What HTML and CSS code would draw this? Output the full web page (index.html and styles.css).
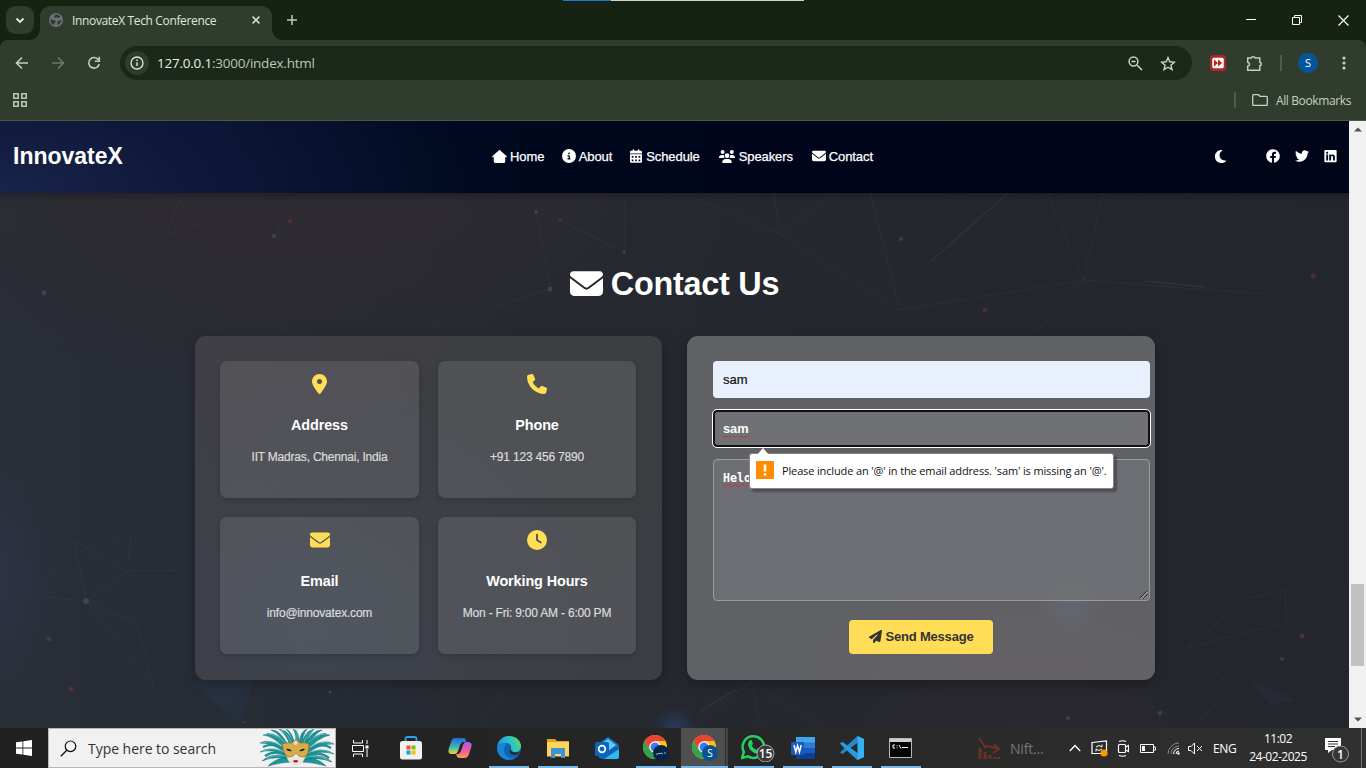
FILE: index.html
```html
<!DOCTYPE html>
<html lang="en">
<head>
<meta charset="utf-8">
<title>InnovateX Tech Conference</title>
<link rel="stylesheet" href="styles.css">
</head>
<body>
<svg class="defs" width="0" height="0" aria-hidden="true">
  <symbol id="envelope" viewBox="0 0 512 512"><path d="M48 64C21.500 64 0 85.500 0 112c0 15.100 7.100 29.300 19.200 38.400L236.800 313.600c11.400 8.500 27 8.500 38.400 0L492.800 150.400c12.100-9.100 19.200-23.300 19.200-38.400c0-26.500-21.500-48-48-48H48zM0 176V384c0 35.300 28.700 64 64 64H448c35.300 0 64-28.700 64-64V176L294.400 339.200c-22.800 17.100-54 17.100-76.800 0L0 176z"/></symbol>
  <symbol id="chrome" viewBox="0 0 24 24">
    <circle cx="12" cy="12" r="12" fill="#fbc116"/>
    <path d="M1.600 6A12 12 0 0 1 22.400 6H12L6.800 15z" fill="#ea4335"/>
    <path d="M1.600 6A12 12 0 0 0 12 24l5.200-9H6.800z" fill="#31a350"/>
    <circle cx="12" cy="12" r="5.800" fill="#fff"/><circle cx="12" cy="12" r="4.500" fill="#3b7bea"/>
  </symbol>
</svg>

<header class="titlebar">
  <div class="top-progress"><i></i></div>
  <button class="tab-search"><svg width="10" height="7" viewBox="0 0 10 7"><path d="M1.500 1.500L5 5l3.500-3.500" fill="none" stroke="#e3ecdd" stroke-width="1.800"/></svg></button>
  <div class="tab">
    <svg width="14" height="14" viewBox="0 0 14 14"><circle cx="7" cy="7" r="7" fill="#6c6f74"/><path d="M1.500 6.200c2 .3 3.200 1.200 4.500 1.300 1.300.2 1 1.400 0 1.800-.8.400-.2 1.500-1 2.700-2-.8-3.800-3-3.500-5.800zM6.500 1.300c2 .2 3.800 1 4.900 2.700L9.600 5.100 7.800 4.300 6.300 5 5 4.100zM8.600 8.200l3.700-1.500c0 2.500-1.600 4.500-4 5.400-.3-1.500.8-2-.2-2.900z" fill="#303d2e"/></svg>
    <span class="tab-title">InnovateX Tech Conference</span>
    <svg class="tab-x" width="8" height="8" viewBox="0 0 8 8"><path d="M.6.6l6.800 6.800M7.400.6L.6 7.400" stroke="#dce7d6" stroke-width="1.500"/></svg>
  </div>
  <svg class="newtab" width="10" height="10" viewBox="0 0 10 10"><path d="M5 0v10M0 5h10" stroke="#b9cdb5" stroke-width="1.500"/></svg>
  <div class="win-controls">
    <svg width="10" height="10" viewBox="0 0 10 10"><path d="M0 4.500h10" stroke="#fff"/></svg>
    <svg width="10" height="10" viewBox="0 0 10 10"><path d="M.5 2.500h7v7h-7zM2.500 2.500v-2h7v7h-2" fill="none" stroke="#fff"/></svg>
    <svg width="11" height="11" viewBox="0 0 11 11"><path d="M.5.5l10 10M10.500.5l-10 10" stroke="#fff" stroke-width="1.200"/></svg>
  </div>
</header>

<div class="toolbar">
  <svg class="arrow" width="14" height="14" viewBox="0 0 14 14"><path d="M13 7H1.800M7 1.500L1.500 7 7 12.500" fill="none" stroke="#bdd2b8" stroke-width="1.600"/></svg>
  <svg class="arrow" width="14" height="14" viewBox="0 0 14 14"><path d="M1 7h11.200M7 1.500L12.500 7 7 12.500" fill="none" stroke="#687c65" stroke-width="1.600"/></svg>
  <svg class="reload" width="14" height="14" viewBox="0 0 14 14"><path d="M11.300 3.700A5.300 5.300 0 1 0 12.200 8M12.300.8v4.400H7.900" fill="none" stroke="#bdd2b8" stroke-width="1.600"/></svg>
  <div class="omnibox">
    <span class="info"><svg width="14" height="14" viewBox="0 0 14 14"><circle cx="7" cy="7" r="6" fill="none" stroke="#dce7d6" stroke-width="1.300"/><path d="M7 6.200V10M7 3.600v1.500" stroke="#dce7d6" stroke-width="1.400"/></svg></span>
    <span class="url"><b>127.0.0.1</b>:3000/index.html</span>
    <svg width="15" height="15" viewBox="0 0 15 15"><path d="M9.200 9.200l4.800 4.800M3.500 5.500h4" stroke="#c8d4c4" stroke-width="1.600"/><circle cx="5.500" cy="5.500" r="4.400" fill="none" stroke="#c8d4c4" stroke-width="1.500"/></svg>
    <svg class="star" width="16" height="15" viewBox="0 0 16 15"><path d="M8 1.600l1.800 4.200 4.600.4-3.500 3 1.100 4.400L8 11.200l-4 2.400 1.100-4.400-3.500-3 4.600-.4z" fill="none" stroke="#c8d4c4" stroke-width="1.400"/></svg>
  </div>
  <svg class="ext" width="16" height="16" viewBox="0 0 16 16"><rect width="16" height="16" rx="3.500" fill="#b32522"/><rect x="2.300" y="2.700" width="11.400" height="10.600" rx="1.500" fill="#fff"/><path d="M4 4.500L8 8l-4 3.500zM8 4.500L12.200 8 8 11.500z" fill="#bd211e"/></svg>
  <svg class="puzzle" width="17" height="17" viewBox="0 0 17 17"><path d="M1.700 3h3.500c.3-1.800 3.600-1.800 3.900 0h4.700v4.200c2 .3 2 3.200 0 3.500v4.600H1.700v-4c2.500-.7 2.500-3.400 0-4.100z" fill="none" stroke="#bdd2b8" stroke-width="1.500"/></svg>
  <i class="bar"></i>
  <span class="avatar">S</span>
  <svg class="dots" width="4" height="14" viewBox="0 0 4 14"><g fill="#c4d6bf"><circle cx="2" cy="2" r="1.600"/><circle cx="2" cy="7" r="1.600"/><circle cx="2" cy="12" r="1.600"/></g></svg>
</div>

<div class="bookmarks">
  <svg width="14" height="14" viewBox="0 0 14 14"><path d="M.8.800h4.400v4.400H.8zM8.800.800h4.400v4.400H8.800zM.8 8.800h4.400v4.400H.8zM8.800 8.800h4.400v4.400H8.800z" fill="none" stroke="#b9c5b6" stroke-width="1.600"/></svg>
  <i class="bar"></i>
  <svg class="folder" width="16" height="12" viewBox="0 0 16 12"><path d="M.7 2v8.400q0 .9.900.9h12.800q.9 0 .9-.9V3.200q0-.9-.9-.9H8L6.500.7H1.600q-.9 0-.9.900z" fill="none" stroke="#c8d4c4" stroke-width="1.300"/></svg>
  <span class="all-bm">All Bookmarks</span>
</div>

<div class="viewport">
  <div class="page">
    <nav class="nav">
      <div class="logo">InnovateX</div>
      <ul class="links">
        <li><svg width="15" height="13" viewBox="0 0 576 512"><path d="M564 232L309 9c-12-11-30-11-42 0L12 232c-22 20-8 56 20 56h32l-1 176c0 27 21 48 48 48h354c27 0 48-21 48-48l-1-176h32c28 0 42-36 20-56z"/></svg>Home</li>
        <li><svg width="14" height="14" viewBox="0 0 512 512"><path d="M256 512A256 256 0 1 0 256 0a256 256 0 1 0 0 512zM216 336h24V272H216c-13.300 0-24-10.700-24-24s10.700-24 24-24h48c13.300 0 24 10.700 24 24v88h8c13.300 0 24 10.700 24 24s-10.700 24-24 24H216c-13.300 0-24-10.700-24-24s10.700-24 24-24zm40-208a32 32 0 1 1 0 64 32 32 0 1 1 0-64z"/></svg>About</li>
        <li><svg width="12" height="14" viewBox="0 0 448 512"><path fill-rule="evenodd" d="M96 32c0-42 64-42 64 0v32h128V32c0-42 64-42 64 0v32h48c27 0 48 21 48 48v48H0v-48c0-27 21-48 48-48h48zM0 192h448v272c0 27-21 48-48 48H48c-27 0-48-21-48-48zM64 256v64h64v-64zm128 0v64h64v-64zm128 0v64h64v-64zM64 384v64h64v-64zm128 0v64h64v-64zm128 0v64h64v-64z"/></svg>Schedule</li>
        <li class="spk"><svg width="16" height="13" viewBox="0 0 640 512"><circle cx="144" cy="80" r="80"/><circle cx="512" cy="80" r="80"/><circle cx="320" cy="224" r="96"/><path d="M0 298c0-59 48-106 107-106h42c17 0 32 3 46 10-10 59 16 94 40 118H21c-12 0-21-10-21-22zM405 320c25-24 50-59 40-118 14-7 29-10 46-10h42c59 0 107 47 107 106 0 12-9 22-21 22zM128 485c0-73 60-133 133-133h118c73 0 133 60 133 133 0 15-12 27-27 27H155c-15 0-27-12-27-27z"/></svg>Speakers</li>
        <li class="con"><svg width="14" height="14"><use href="#envelope"/></svg>Contact</li>
      </ul>
      <div class="social">
        <svg class="moon" width="13" height="15" viewBox="0 0 384 512"><path d="M223.500 32C100 32 0 132.300 0 256S100 480 223.500 480c60.600 0 115.500-24.200 155.800-63.400c5-4.900 6.300-12.500 3.100-18.700s-10.100-9.700-17-8.500c-9.800 1.700-19.800 2.600-30.100 2.600c-96.900 0-175.500-78.800-175.500-176c0-65.800 36-123.100 89.300-153.300c6.100-3.500 9.200-10.500 7.700-17.300s-7.300-11.900-14.300-12.500c-6.300-.5-12.600-.8-19-.8z"/></svg>
        <svg width="14" height="14" viewBox="0 0 512 512"><path d="M504 256C504 119 393 8 256 8S8 119 8 256c0 123.780 90.690 226.380 209.250 245V327.690h-63V256h63v-54.640c0-62.150 37-96.480 93.670-96.480 27.140 0 55.520 4.840 55.520 4.840v61h-31.280c-30.800 0-40.410 19.120-40.410 38.730V256h68.780l-11 71.690h-57.780V501C413.310 482.380 504 379.780 504 256z"/></svg>
        <svg width="14" height="14" viewBox="0 0 512 512"><path d="M459.370 151.716c.325 4.548.325 9.097.325 13.645 0 138.720-105.583 298.558-298.558 298.558-59.452 0-114.680-17.219-161.137-47.106 8.447.974 16.568 1.299 25.340 1.299 49.055 0 94.213-16.568 130.274-44.832-46.132-.975-84.792-31.188-98.112-72.772 6.498.974 12.995 1.624 19.818 1.624 9.421 0 18.843-1.300 27.614-3.573-48.081-9.747-84.143-51.980-84.143-102.985v-1.299c13.969 7.797 30.214 12.670 47.431 13.319-28.264-18.843-46.781-51.005-46.781-87.391 0-19.492 5.197-37.360 14.294-52.954 51.655 63.675 129.300 105.258 216.365 109.807-1.624-7.797-2.599-15.918-2.599-24.040 0-57.828 46.782-104.934 104.934-104.934 30.213 0 57.502 12.670 76.670 33.137 23.715-4.548 46.456-13.320 66.599-25.340-7.798 24.366-24.366 44.833-46.132 57.827 21.117-2.273 41.584-8.122 60.426-16.243-14.292 20.791-32.161 39.308-52.628 54.253z"/></svg>
        <svg width="13" height="14" viewBox="0 0 448 512"><path d="M416 32H31.900C14.300 32 0 46.500 0 64.300v383.400C0 465.500 14.300 480 31.900 480H416c17.600 0 32-14.500 32-32.300V64.300c0-17.800-14.400-32.300-32-32.300zM135.400 416H69V202.200h66.500V416zm-33.200-243c-21.300 0-38.500-17.300-38.500-38.500S80.900 96 102.200 96c21.200 0 38.500 17.300 38.500 38.500 0 21.300-17.200 38.500-38.500 38.500zm282.100 243h-66.400V312c0-24.800-.5-56.700-34.500-56.700-34.600 0-39.900 27-39.900 54.900V416h-66.400V202.200h63.700v29.200h.9c8.900-16.800 30.600-34.500 62.900-34.500 67.200 0 79.700 44.300 79.700 101.900V416z"/></svg>
      </div>
    </nav>
    <main class="contact">
      <svg class="network" width="1349" height="535" viewBox="0 193 1349 535" fill="none">
        <g stroke="#4c5362" stroke-opacity=".17">
          <path d="M179 200l-13 35 35-12zM273 238l13-25M536 212l-107 116 122-40zM536 212l24 8 65 33-1-60M560 220l22-27M536 212l11-19M74 541l12 60-49-5zL128 571 86 601l68 85-18-63-50-22M128 571l54-1M113 541l18-8-2 26zM696 199l83 34 120 77 184-30 180 14M779 233l60-40M774 193l5 40M870 193l30 117M1048 193l35 87 20-87M1083 280l105-87M1083 280l-48 54M1083 280l50 50M700 714l51-32 74 46M751 682l-60 46M751 682l10 46M1135 682l25 35M1187 648l60-50 38-8 2 32-100 26 47 40-35 33M336 680l47 48M510 680l-30 48"/>
        </g>
        <path d="M930 262L1008 193" stroke="#747a84" stroke-opacity=".22"/><path d="M1145 281l60 6M700 711l36-22" stroke="#747a84" stroke-opacity=".22"/>
        <g fill="#4c6379" fill-opacity=".45"><circle cx="44" cy="293" r="2.500"/><circle cx="86" cy="601" r="3"/><circle cx="550" cy="289" r="2.500"/><circle cx="274" cy="236" r="2"/><circle cx="901" cy="239" r="2"/><circle cx="536" cy="212" r="1.700"/><circle cx="624" cy="252" r="1.700"/><circle cx="1160" cy="713" r="2.200"/><circle cx="1068" cy="718" r="2"/><circle cx="1282" cy="659" r="2"/><circle cx="49" cy="639" r="2"/><circle cx="330" cy="692" r="1.500"/></g>
        <g fill="#843a40" fill-opacity=".45"><circle cx="290" cy="221" r="2"/><circle cx="71" cy="689" r="2.500"/><circle cx="985" cy="310" r="2.500"/><circle cx="1313" cy="276" r="2.500"/><circle cx="1302" cy="636" r="2.500"/><circle cx="244" cy="722" r="1.500"/><circle cx="560" cy="220" r="1.700"/></g>
        <path d="M195 686l46 38 12-44h-53z" fill="#26374f" opacity=".4"/><path d="M1250 678l45 22-26 5z" fill="#42435c" opacity=".15"/>
      </svg>
      <h2><svg width="33" height="33"><use href="#envelope"/></svg>Contact Us</h2>
      <div class="columns">
        <section class="panel info-panel">
          <article><svg width="15" height="20" viewBox="0 0 384 512"><path d="M215.700 499.200C267 435 384 279.400 384 192C384 86 298 0 192 0S0 86 0 192c0 87.400 117 243 168.300 307.200c12.300 15.300 35.100 15.300 47.400 0zM192 128a64 64 0 1 1 0 128 64 64 0 1 1 0-128z"/></svg><h3>Address</h3><p>IIT Madras, Chennai, India</p></article>
          <article><svg width="20" height="20" viewBox="0 0 512 512"><path d="M164.900 24.600c-7.700-18.600-28-28.500-47.400-23.200l-88 24C12.100 30.200 0 46 0 64C0 311.400 200.600 512 448 512c18 0 33.800-12.100 38.600-29.500l24-88c5.300-19.400-4.600-39.700-23.200-47.400l-96-40c-16.300-6.800-35.200-2.100-46.300 11.600L304.700 368C234.300 334.700 177.300 277.700 144 207.300L193.300 167c13.700-11.200 18.400-30 11.600-46.300l-40-96z"/></svg><h3>Phone</h3><p>+91 123 456 7890</p></article>
          <article><svg width="20" height="20"><use href="#envelope"/></svg><h3>Email</h3><p>info@innovatex.com</p></article>
          <article><svg width="20" height="20" viewBox="0 0 512 512"><path d="M256 0a256 256 0 1 1 0 512A256 256 0 1 1 256 0zM232 120V256c0 8 4 15.500 10.700 20l96 64c11 7.400 25.900 4.400 33.300-6.700s4.400-25.900-6.700-33.300L280 243.200V120c0-13.300-10.700-24-24-24s-24 10.700-24 24z"/></svg><h3>Working Hours</h3><p>Mon - Fri: 9:00 AM - 6:00 PM</p></article>
        </section>
        <section class="panel form-panel">
          <div class="field filled">sam</div>
          <div class="field focused"><span class="spell">sam</span>
            <div class="bubble">
              <svg class="bubble-tip" width="14" height="8" viewBox="0 0 14 8"><path d="M1 8l6-7 6 7z" fill="#fff"/></svg>
              <svg width="18" height="18" viewBox="0 0 18 18"><rect width="18" height="18" rx="1" fill="#ff8c00"/><path d="M9 3.500v7M9 12.200v2.300" stroke="#fff" stroke-width="2.600"/></svg>
              <span>Please include an '@' in the email address. 'sam' is missing an '@'.</span>
            </div>
          </div>
          <div class="area"><span class="typo">Helo</span><svg class="grip" width="9" height="9" viewBox="0 0 9 9"><path d="M.5 8.500l8-8M4.500 8.500l4-4" stroke="#222" /><path d="M1.500 9L9 1.500M5.500 9L9 5.500" stroke="#ddd" stroke-width=".7"/></svg></div>
          <button class="send"><svg width="13" height="13" viewBox="0 0 512 512"><path d="M498.100 5.600c10.100 7 15.400 19.100 13.500 31.200l-64 416c-1.500 9.700-7.400 18.200-16 23s-18.900 5.400-28 1.600L284 427.700l-68.500 74.100c-8.900 9.700-22.900 12.900-35.200 8.100S160 493.200 160 480V396.400c0-4 1.500-7.800 4.200-10.700L331.800 202.800c5.800-6.300 5.600-16-.4-22s-15.700-6.400-22-.7L106 360.800 17.700 316.600C7.100 311.300 .3 300.700 0 288.900s5.900-22.800 16.100-28.700l448-256c10.700-6.100 23.900-5.500 34 1.400z"/></svg>Send Message</button>
        </section>
      </div>
    </main>
  </div>
  <div class="scrollbar">
    <svg width="8" height="5" viewBox="0 0 8 5"><path d="M0 4.500L4 .5l4 4z" fill="#505050"/></svg>
    <i class="thumb"></i>
    <svg width="8" height="5" viewBox="0 0 8 5"><path d="M0 .5h8l-4 4z" fill="#505050"/></svg>
  </div>
</div>

<footer class="taskbar">
  <div class="start"><svg width="16" height="16" viewBox="0 0 16 16"><path d="M0 2.300L6.500 1.400v6.200H0zM7.300 1.200L16 0v7.600H7.300zM0 8.400h6.500v6.200L0 13.700zM7.300 8.400H16V16l-8.700-1.200z" fill="#fff"/></svg></div>
  <div class="search">
    <svg width="17" height="17" viewBox="0 0 17 17"><circle cx="10.500" cy="6.300" r="5.300" fill="none" stroke="#111" stroke-width="1.200"/><path d="M6.800 10.200L.8 16.200" stroke="#111" stroke-width="1.300"/></svg>
    <span>Type here to search</span>
    <svg class="mask" width="74" height="38" viewBox="0 0 74 38">
      <g fill="#1e9696" stroke="#0c5c67" stroke-width=".4">
        <path d="M30 20Q14 2 3 6Q15 7 28 24zM28 22Q10 8 0 14Q14 14 28 26zM28 25Q10 16 0 23Q14 19 30 29zM30 26Q10 24 2 32Q16 26 32 31zM30 28Q17 28 8 37Q22 33 33 33zM44 20Q56 2 70 6Q58 8 45 24zM46 22Q63 8 74 15Q59 14 46 26zM46 25Q64 17 74 25Q59 20 44 29zM44 26Q64 25 72 33Q57 27 42 31zM44 28Q57 28 66 37Q52 33 41 33zM29 18Q20 0 11 1Q21 5 30 23zM32 16Q27 1 19 0Q27 5 32 22zM35 16Q32 2 26 0Q32 6 35 20zM36 14Q36 3 33 0Q40 2 39 17zM39 15Q40 2 47 0Q42 6 42 19zM42 16Q46 2 54 0Q47 8 44 20zM44 18Q51 1 62 1Q53 5 45 23z"/>
      </g>
      <g fill="none" stroke="#208c93" stroke-width="2.200"><path d="M31 18Q17 5 7 5M29 24Q14 12 3 18M31 28Q16 20 5 27M43 18Q57 5 66 5M45 24Q60 12 71 19M43 28Q58 21 69 29M34 17Q29 4 23 2M41 17Q46 4 51 2"/></g>
      <g fill="none" stroke="#62c3be" stroke-width=".8"><path d="M32 19Q16 4 6 5M30 22Q15 9 2 14M30 26Q14 16 3 22M31 29Q17 23 6 30M43 19Q57 4 67 5M44 22Q59 9 72 15M43 26Q60 17 72 24M43 29Q57 24 69 32M33 18Q28 3 20 1M42 18Q47 3 54 1M37 15V1"/></g>
      <path d="M26 22q10-7 20 0 0 12-10 15.500-10-3.500-10-15.500z" fill="#eee5df"/>
      <path d="M22 15q5-2 10-1l4-4 4 4q6-1 9 1 0 13-6 13-4 0-7-4-3 4-7 4-5 0-7-13z" fill="#d9aa48" stroke="#80601e" stroke-width=".6"/>
      <path d="M26 20q3-1 6 2-4 1-6-2zM39 22q3-3 6-2-2 3-6 2z" fill="#1d2426"/><path d="M32.500 32q3.500-2 6 0-2.500 3-6 0z" fill="#b91327"/><circle cx="35.500" cy="14" r="2" fill="#d7dde2"/>
    </svg>
  </div>
  <div class="tview"><svg width="17" height="17" viewBox="0 0 17 17" fill="none" stroke="#fff"><path d="M1.500 0v3h9V0M1.500 17v-3h9v3M.5 5.500h11v6H.5zM15 0v4M15 9v8"/><path d="M13.500 5.500h3v3h-3z" fill="#fff" stroke="none"/></svg></div>
  <div class="apps">
    <div><svg width="24" height="24" viewBox="0 0 24 24"><path d="M6.500 7V3q0-2 2-2h7q2 0 2 2v4" fill="none" stroke="#21a8e3" stroke-width="1.800"/><rect x="1" y="5" width="22" height="18.500" rx="2.500" fill="#f1f1f1"/><path d="M7.500 9.500h4v4h-4z" fill="#f35325"/><path d="M12.500 9.500h4v4h-4z" fill="#81bc06"/><path d="M7.500 14.500h4v4h-4z" fill="#05a6f0"/><path d="M12.500 14.500h4v4h-4z" fill="#ffba08"/></svg></div>
    <div><svg width="24" height="22" viewBox="0 0 24 22"><defs><linearGradient id="c1" x2="0" y2="1"><stop stop-color="#2a63df"/><stop offset=".55" stop-color="#31bab3"/><stop offset="1" stop-color="#efd83d"/></linearGradient><linearGradient id="c2" x2="0" y2="1"><stop stop-color="#a75cf2"/><stop offset=".5" stop-color="#ec59a7"/><stop offset="1" stop-color="#fc9c4a"/></linearGradient></defs><path d="M7 1h9q2 0 2 4h-3q-2 0-3 3l-2 6q-1 3-3 3H4q-5 0-3-6l2-6Q4 1 7 1z" fill="url(#c1)"/><path d="M18 5h3q4 1 2 6l-2 6q-1 4-5 4h-5q-2 0-3-4h2q2 0 3-3l2-6q1-3 3-3z" fill="url(#c2)"/></svg></div>
    <div class="open"><svg width="24" height="24" viewBox="0 0 24 24"><defs><linearGradient id="e1" x1="0" y1=".5" x2="1" y2=".2"><stop stop-color="#188ed8"/><stop offset=".5" stop-color="#28bed0"/><stop offset="1" stop-color="#5edb61"/></linearGradient></defs><circle cx="12" cy="12" r="12" fill="#1262b1"/><path d="M0 11C1 4 6 0 12 0c8 0 12 6 12 10 0 4-3 6-6 6-4 0-5-1-4-3 1-4-2-6-5-6-5 0-8 2-9 4z" fill="url(#e1)"/><path d="M0 12c2-5 7-6 10-4-5 3-4 11 3 14l5 0c-7 4-17 1-18-10z" fill="#1686d9"/><path d="M14 13c0 3 3 4 9 3-2 3-5 3.500-8 2.500-3-1.500-3-4.500-1-5.500z" fill="#222b36"/></svg></div>
    <div class="open"><svg width="22" height="20" viewBox="0 0 22 20"><path d="M0 1h8l2 2h12v15H0z" fill="#e0a51c"/><path d="M0 4h22v14.500H0z" fill="#ffd35b"/><path d="M4 20v-9q0-1 1-1h12q1 0 1 1v9h-4v-4H8v4z" fill="#3d93d8"/></svg></div>
    <div><svg width="24" height="22" viewBox="0 0 24 22"><path d="M3 7L13 0l10 7v14H4z" fill="#1472c8"/><path d="M6 7l7-5 8 6-8 6z" fill="#63c9f0"/><path d="M24 8v12q0 2-2 2H8z" fill="#30b9ef"/><path d="M12 15L24 8v4L9 22H6z" fill="#1160ae"/><rect y="5" width="14" height="14" rx="1.500" fill="#0a65bd"/><circle cx="7" cy="12" r="3.300" fill="none" stroke="#fff" stroke-width="1.800"/></svg></div>
    <div class="open"><svg width="26" height="26" viewBox="0 0 26 26"><use href="#chrome" width="24" height="24"/><circle cx="18" cy="18" r="8" fill="#07244b"/><path d="M13 19q2 1 3-1l1 1q1-2 3 0M22 17v2" fill="none" stroke="#d6dce4" stroke-width=".8"/></svg></div>
    <div class="open current"><svg width="26" height="26" viewBox="0 0 26 26"><use href="#chrome" width="24" height="24"/><circle cx="18" cy="18" r="8" fill="#075292"/><text x="18" y="21.500" text-anchor="middle" class="profile">S</text></svg></div>
    <div class="open"><svg width="34" height="28" viewBox="0 0 34 28"><path d="M1 24l1.800-6A10.800 10.800 0 1 1 7 22.400z" fill="none" stroke="#24cf63" stroke-width="2.500"/><path d="M8 7q2-2 3 0l1 3-1.500 1.500q2 3.500 5 4.500l1.500-2 4 2q0 4-4 4Q9 19 7 11q0-2 1-4z" fill="#24cf63"/><circle cx="24.500" cy="19.500" r="8.500" fill="#3a3a3a" stroke="#aaa"/><text x="24.500" y="24" text-anchor="middle" class="count">15</text></svg></div>
    <div class="open"><svg width="24" height="22" viewBox="0 0 24 22"><path d="M5 0h19v6H5z" fill="#41a5ee"/><path d="M5 5.500h19V11H5z" fill="#2b7cd3"/><path d="M5 11h19v5.500H5z" fill="#185abd"/><path d="M5 16h19v6H5z" fill="#103f91"/><rect y="5" width="13" height="13" rx="1" fill="#185abd"/><path d="M3 8l1.800 7L6.600 8.600 8.400 15 10.200 8" fill="none" stroke="#fff" stroke-width="1.500"/></svg></div>
    <div class="open"><svg width="24" height="24" viewBox="0 0 24 24"><path fill-rule="evenodd" d="M17.500 0L24 3v18l-6.500 3L7 14.500 2.500 18 0 16.500 4.500 12 0 7.500 2.500 6 7 9.500zM18 6.500L10.500 12l7.500 5.500z" fill="#2489ca"/><path d="M17.500 0L24 3v18l-6.500 3z" fill="#35b1f1"/><path d="M0 7.500L2.500 6 18 17.500V24h-.5z" fill="#2a9be0"/></svg></div>
    <div class="open"><svg width="23" height="20" viewBox="0 0 23 20"><path d="M.5.500h22v19H.5z" fill="#050505" stroke="#b9b9b9"/><path d="M1 1h21v3H1z" fill="#d0d0d0"/><path d="M6 7H4v3h2M8 7.500v.8M8 9.500v.8M10 7l2 3.500M13 9.500h6" fill="none" stroke="#fff"/></svg></div>
  </div>
  <div class="tray">
    <svg class="stock" width="23" height="23" viewBox="0 0 23 23" fill="none" stroke="#6c321f"><path d="M1 1l6 9 3-1 11 3M16 7l5 5-6 4" stroke-width="2"/><path d="M2 11v11M7 15v7M12 18v4M17 20v2M21 20v2" stroke-width="3"/></svg>
    <span class="nift">Nift...</span>
    <svg class="chev" width="12" height="8" viewBox="0 0 12 8"><path d="M.8 7L6 1.500 11.200 7" fill="none" stroke="#fff" stroke-width="1.400"/></svg>
    <svg width="17" height="17" viewBox="0 0 17 17"><path d="M1 2.500L15.500 1v12.500H1z" fill="none" stroke="#fff" stroke-width="1.200"/><path d="M5 7q3-3 6 0V4.500M11 9q-3 3-6 0v2.500" fill="none" stroke="#fff"/><circle cx="13" cy="13" r="3.600" fill="#ff9800"/></svg>
    <svg width="12" height="17" viewBox="0 0 12 17" fill="none" stroke="#fff" stroke-width="1.200"><path d="M2 1.500q4-1.500 7 0M2 15.500q4 1.500 7 0M2.500 4.500h5q1 0 1 1v6q0 1-1 1h-5q-1 0-1-1v-6q0-1 1-1zM8.500 7l3-1.500v6l-3-1.500"/></svg>
    <svg width="16" height="9" viewBox="0 0 16 9"><path d="M.5.500h13v8H.5zM14 3h1.500v3H14" fill="none" stroke="#fff"/><path d="M2 2h3v5H2z" fill="#fff"/></svg>
    <svg width="13" height="13" viewBox="0 0 13 13" fill="none"><path d="M1 12A11 11 0 0 1 12 1M4 12A8 8 0 0 1 12 4" stroke="#888"/><path d="M6.500 12A5.500 5.500 0 0 1 12 6.500M9 12A3 3 0 0 1 12 9" stroke="#fff"/><circle cx="11.500" cy="11.500" r="1.200" fill="#fff"/></svg>
    <svg width="15" height="13" viewBox="0 0 15 13" fill="none" stroke="#fff"><path d="M.5 4.500H3l3.500-3.500v11L3 8.500H.5zM9 4l5 5M14 4L9 9"/></svg>
    <span class="lang">ENG</span>
    <div class="clock"><span>11:02</span><span>24-02-2025</span></div>
    <svg class="notif" width="26" height="27" viewBox="0 0 26 27"><path d="M1 1h16v12H8l-4 3v-3H1z" fill="#fff"/><path d="M4 4.500h10M4 7h10M4 9.500h7" stroke="#333"/><circle cx="16.500" cy="17" r="8" fill="#363636" stroke="#999"/><text x="16.500" y="21.500" text-anchor="middle" class="count">1</text></svg>
    <i class="peek"></i>
  </div>
</footer>
</body>
</html>
```
FILE: styles.css
```css
* { box-sizing: border-box; }
body { margin: 0; width: 1366px; height: 768px; overflow: hidden; display: flex; flex-direction: column; background: #162312; font-family: "Open Sans", "Noto Sans", sans-serif; }
svg { display: block; flex: none; }
.defs { position: absolute; }
button { border: 0; padding: 0; }

.titlebar { height: 40px; display: flex; align-items: center; background: #162312; padding-left: 6px; position: relative; flex: none; }
.top-progress { position: absolute; left: 563px; top: 0; width: 241px; height: 1px; background: #d0d4ce; }
.top-progress i { display: block; width: 48px; height: 1px; background: #1979d3; }
.tab-search { width: 28px; height: 28px; border-radius: 9px; background: #303d2e; display: flex; align-items: center; justify-content: center; }
.tab { width: 232px; height: 34px; align-self: flex-end; margin-left: 6px; padding: 0 12px 6px 9px; background: #303d2e; border-radius: 10px 10px 0 0; display: flex; align-items: center; position: relative; }
.tab::before, .tab::after { content: ""; position: absolute; bottom: 0; width: 10px; height: 10px; }
.tab::before { left: -10px; background: radial-gradient(circle at 0 0, transparent 9.500px, #303d2e 10px); }
.tab::after { right: -10px; background: radial-gradient(circle at 100% 0, transparent 9.500px, #303d2e 10px); }
.tab-title { margin-left: 9px; font-size: 12px; letter-spacing: -.35px; color: #dfe8da; white-space: nowrap; }
.tab-x { margin-left: auto; }
.newtab { margin-left: 15px; }
.win-controls { margin-left: auto; display: flex; gap: 36px; padding-right: 17px; align-items: center; }

.toolbar { height: 40px; flex: none; display: flex; align-items: center; padding: 6px 20px 0 15px; background: #303d2e; border-radius: 8px 8px 0 0; }
.arrow + .arrow { margin-left: 22px; }
.reload { margin-left: 22px; }
.omnibox { width: 1072px; height: 34px; margin-left: 19px; background: #1b281a; border-radius: 17px; display: flex; align-items: center; padding: 0 16px 0 5px; }
.info { width: 24px; height: 24px; border-radius: 50%; background: #303d2e; display: flex; align-items: center; justify-content: center; }
.url { margin: 0 auto 0 8px; font-size: 13.500px; letter-spacing: -.23px; color: #bcc7b8; }
.url b { font-weight: 400; color: #e8efe5; }
.star { margin-left: 17px; }
.ext { margin-left: 18px; }
.puzzle { margin-left: 20px; }
.bar { width: 2px; height: 16px; background: #4c5d49; }
.toolbar .bar { margin-left: 17px; }
.avatar { margin-left: 16px; width: 20px; height: 20px; border-radius: 50%; background: #04569c; color: #fff; font-size: 11px; line-height: 20px; text-align: center; }
.dots { margin-left: 24px; }
.bookmarks { height: 41px; flex: none; display: flex; align-items: center; padding: 0 15px 0 13px; background: #303d2e; border-bottom: 1px solid #4b5848; }
.bookmarks .bar { margin-left: auto; }
.folder { margin-left: 16px; }
.all-bm { margin-left: 8px; font-size: 12px; letter-spacing: -.38px; color: #c6d0c2; }

.viewport { height: 607px; flex: none; display: flex; }
.page { width: 1349px; font-family: "Liberation Sans", Arial, sans-serif; }
.nav { height: 72px; display: grid; grid-template-columns: 479px auto 1fr; align-items: center; padding: 0 12px 2px 13px; color: #fff; background: radial-gradient(ellipse 480px 220px at 0 100%, #182449 0, #0d1738 45%, transparent 100%), linear-gradient(90deg, #0a1230, #000a20 30%, #00051b 55%, #000519); }
.nav svg { fill: #fff; }
.logo { font-size: 23px; font-weight: 700; }
.links { list-style: none; margin: 0; padding: 0; display: flex; gap: 18px; font-size: 13px; letter-spacing: -.1px; -webkit-text-stroke: .25px #fff; }
.links li { display: flex; align-items: center; gap: 3px; }
.links li + li { gap: 2.500px; }
.links li:nth-child(3) { gap: 4px; }
.links .spk { gap: 4px; margin-left: 1px; }
.links .con { gap: 3px; margin-left: 1px; }
.social { display: flex; justify-content: flex-end; align-items: center; gap: 15px; }
.moon { margin-right: 24px; }

.contact { height: 535px; position: relative; display: flex; flex-direction: column; align-items: center; padding-top: 74px; background: radial-gradient(ellipse 60px 130px at 0 72%, #303246, transparent), radial-gradient(ellipse 440px 200px at 22% 0, #2e2a31 25%, transparent), radial-gradient(ellipse 260px 90px at 76% 100%, #2b282e, transparent), radial-gradient(ellipse 22px 22px at 50% 100%, #263b5c, transparent), linear-gradient(90deg, #292e37 0, #25282f 45%, #23262d); }
.contact::before { content: ""; position: absolute; left: 0; right: 0; top: 0; height: 9px; background: linear-gradient(rgba(0, 0, 0, .22), transparent); }
.network { position: absolute; left: 0; top: 0; }
.contact h2 { position: relative; margin: 0; height: 35px; display: flex; align-items: center; gap: 8px; font-size: 32.400px; letter-spacing: -.25px; color: #fff; }
.contact h2 svg { fill: #fff; margin-top: -2px; }
.columns { position: relative; display: flex; gap: 25px; margin: 34px 0 0 1px; }
.panel { height: 344px; border-radius: 11px; box-shadow: 0 4px 12px rgba(0, 0, 0, .25); }
.info-panel { width: 467px; padding: 25px; display: grid; grid-template-columns: 199px 198px; grid-template-rows: 137px 137px; gap: 19px; background: radial-gradient(ellipse 65% 75% at 25% 85%, rgba(62, 70, 84, .6), transparent), linear-gradient(120deg, #403f46, #3d3e42 45%, #3c3e43); }
.info-panel article { border-radius: 7px; background: rgba(255, 255, 255, .1); box-shadow: 0 2px 6px rgba(0, 0, 0, .18); display: flex; flex-direction: column; align-items: center; padding-top: 13px; }
.info-panel svg { fill: #ffdd57; }
.info-panel h3 { margin: 22px 0 0; font-size: 14.400px; line-height: 18px; letter-spacing: -.1px; color: #fff; }
.info-panel p { margin: 15px 0 0; font-size: 12px; line-height: 17px; letter-spacing: -.2px; color: #dadbdc; -webkit-text-stroke: .2px #dadbdc; white-space: nowrap; }
.form-panel { width: 468px; padding: 25px 26px; background: radial-gradient(circle 28px at 82% 79%, rgba(102, 106, 120, .7), transparent), radial-gradient(ellipse 230px 100px at 72% 100%, #646164, transparent), #606165; }
.field { width: 437px; height: 37px; border-radius: 4px; padding: 0 10px; font-size: 13px; line-height: 37px; }
.filled { background: #e8f0fe; color: #111; -webkit-text-stroke: .2px #111; }
.focused { position: relative; margin-top: 12px; background: #707175; color: #fff; font-weight: 700; border: 2px solid #101010; outline: 1px solid #fff; padding: 0 8px; line-height: 33px; font-size: 12.800px; }
.spell { background: repeating-linear-gradient(90deg, #e02525 0 2px, transparent 2px 3px) left bottom / 100% 1px no-repeat; padding-bottom: 1px; }
.bubble { position: absolute; z-index: 2; left: 34px; top: 41px; width: 365px; height: 36px; padding: 0 6px; display: flex; align-items: center; gap: 8px; background: #fff; border: 1px solid #858585; border-radius: 3px; box-shadow: 3px 3px 2px rgba(0, 0, 0, .3); color: #111; font: 11px/18px "Open Sans", "Noto Sans", sans-serif; letter-spacing: -.14px; white-space: nowrap; }
.bubble > svg { margin-top: -2px; }
.bubble .bubble-tip { position: absolute; left: 6px; top: -7px; margin: 0; }
.area { position: relative; width: 437px; height: 142px; margin-top: 12px; border: 1px solid #9b9ca0; border-radius: 4px; background: rgba(112, 113, 117, .92); padding: 9px 9px; color: #fff; font: 700 11.700px/18px "DejaVu Sans Mono", monospace; }
.typo { text-decoration: underline wavy #ed1c24 1px; text-underline-offset: 1px; }
.grip { position: absolute; right: 1px; bottom: 1px; }
.send { width: 144px; height: 34px; margin: 19px 0 0 136px; padding-bottom: 1px; border-radius: 4px; background: #ffdd57; color: #333; display: flex; align-items: center; justify-content: center; gap: 4px; font: 700 13px "Liberation Sans", Arial, sans-serif; letter-spacing: -.2px; }
.send svg { fill: #333; }
.scrollbar { width: 17px; background: #f1f1f1; display: flex; flex-direction: column; align-items: center; padding: 6px 0; }
.thumb { width: 13px; height: 82px; background: #c1c1c1; margin: 452px 0 auto; }

.taskbar { height: 40px; flex: none; display: flex; align-items: center; background: linear-gradient(90deg, #202020, #262626 50%, #303030); color: #fff; }
.start, .tview { width: 48px; display: flex; justify-content: center; }
.search { width: 288px; height: 40px; border: 1px solid #b6b6b6; background: #f1f1f1; display: flex; align-items: center; padding-left: 11px; color: #333; font-size: 14px; letter-spacing: -.04px; }
.search span { margin-left: 11px; }
.mask { margin-left: auto; margin-right: 1px; }
.apps { display: flex; margin-left: 2px; height: 40px; }
.apps div { width: 49px; height: 40px; display: flex; align-items: center; justify-content: center; position: relative; }
.apps .open::after { content: ""; position: absolute; left: 5px; right: 4px; bottom: 0; height: 2px; background: #76b9ed; }
.apps .current { background: linear-gradient(90deg, #4f4f4f 44px, #303030 44px, #303030 45px, #454545 45px); width: 47px; margin: 0 1px; }
.apps .current::after { left: 0; right: 0; }
.profile { font: 10px "Open Sans", sans-serif; fill: #fff; }
.count { font: 600 12px "Open Sans", sans-serif; fill: #fff; }
.apps .open:nth-child(8) svg { margin-left: 9px; }
.tray { margin-left: auto; display: flex; align-items: center; height: 40px; }
.nift { margin-left: 9px; width: 36px; font-size: 14px; letter-spacing: -.2px; color: #777; }
.chev { margin: 0 10px 0 23px; }
.tray .chev + svg { margin-right: 9px; }
.tray .chev + svg + svg { margin-right: 11px; }
.tray .chev + svg + svg + svg { margin-right: 11px; }
.tray .chev + svg + svg + svg + svg { margin-right: 8px; }
.lang { margin-left: 10px; font-size: 12px; letter-spacing: -.4px; width: 25px; }
.clock { margin-left: 4px; width: 72px; display: flex; flex-direction: column; align-items: center; font-size: 12px; line-height: 18px; letter-spacing: -.5px; }
.notif { margin: 4px 0 0 10px; }
.peek { width: 1px; height: 40px; background: #777; margin: 0 4px 0 11px; }
```
